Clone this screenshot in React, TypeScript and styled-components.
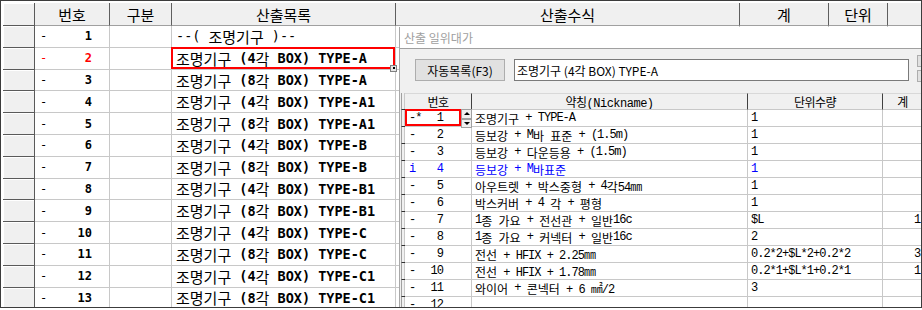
import React from 'react'
import styled, { createGlobalStyle } from 'styled-components'

const KR = `"Noto Sans CJK KR", "Noto Sans", sans-serif`
const MONO = `"DejaVu Sans Mono", "Liberation Mono", "Noto Sans CJK KR", monospace`
const SMALL = `"Liberation Mono", "Noto Sans CJK KR", monospace`

const GlobalStyle = createGlobalStyle`
  html, body {
    margin: 0;
    padding: 0;
    background: #fff;
  }
  body {
    font-family: ${KR};
    color: #000;
  }
`

type Variant = 'list' | 'plain' | 'small'

const HAN = /([\u1100-\u11ff\u3130-\u318f\uac00-\ud7af]+)/

const Han = styled.span<{ $v: Variant }>`
  font-family: ${KR};
  font-size: ${p => (p.$v === 'small' ? '12px' : '15px')};
  font-weight: 400;
`

const Lat = styled.span<{ $v: Variant }>`
  font-family: ${p => (p.$v === 'small' ? SMALL : MONO)};
  font-size: ${p => (p.$v === 'small' ? '12px' : '13.5px')};
  font-weight: ${p => (p.$v === 'list' ? 700 : 400)};
  letter-spacing: ${p => (p.$v === 'small' ? '-1px' : '0')};
  white-space: pre;
`

// hangul in a thin gothic, the rest in a mono face, as the old grid draws it
const Mixed = ({ text, v }: { text: string; v: Variant }) => (
  <>
    {text
      .split(HAN)
      .filter(Boolean)
      .map((part, i) =>
        HAN.test(part) ? (
          <Han key={i} $v={v}>{part}</Han>
        ) : (
          <Lat key={i} $v={v}>{part}</Lat>
        )
      )}
  </>
)

const Frame = styled.div`
  position: relative;
  box-sizing: border-box;
  width: 922px;
  height: 308px;
  border: 1px solid #3c3c3c;
  padding: 2px 0 0 2px;
  overflow: hidden;
  background: #fff;
`

const Sheet = styled.div`
  display: grid;
  grid-template-columns: 32px 75px 62px 224px 344px 89px 59px 60px;
  grid-template-rows: 23px;
  grid-auto-rows: 21.8px;
`

const HeadCell = styled.div`
  box-sizing: border-box;
  display: flex;
  align-items: center;
  justify-content: center;
  background: #f0f0f0;
  border-right: 1px solid #5f5f5f;
  border-bottom: 1px solid #a0a0a0;
  font-family: ${KR};
  font-size: 15px;
  white-space: nowrap;
  overflow: hidden;
`

const Selector = styled.div`
  box-sizing: border-box;
  background: #f0f0f0;
  border-right: 1px solid #5a5a5a;
  border-bottom: 1px solid #5a5a5a;
  box-shadow: inset 1px 1px 0 #fff;
`

const Cell = styled.div`
  box-sizing: border-box;
  display: flex;
  align-items: center;
  border-right: 1px solid #c8c8c8;
  border-bottom: 1px solid #c8c8c8;
  white-space: nowrap;
  overflow: hidden;
`

const NoCell = styled(Cell)<{ $red?: boolean }>`
  justify-content: space-between;
  padding: 0 17px 0 5px;
  color: ${p => (p.$red ? '#f00' : '#000')};
  font-family: ${MONO};
  font-size: 12px;
`

const Num = styled.span`
  font-weight: 700;
`

const ListCell = styled(Cell)<{ $selected?: boolean }>`
  position: relative;
  overflow: visible;
  padding-left: 4px;

  &::after {
    content: '';
    display: ${p => (p.$selected ? 'block' : 'none')};
    position: absolute;
    left: -1px;
    top: -1px;
    right: 0;
    bottom: 0;
    border: 2px solid #f00;
  }
`

const Handle = styled.span`
  position: absolute;
  right: -2px;
  bottom: -3px;
  z-index: 2;
  box-sizing: border-box;
  width: 7px;
  height: 7px;
  background: #e6e6e6;
  border: 1px solid #808080;
  display: flex;
  align-items: center;
  justify-content: center;

  &::before {
    content: '';
    width: 2px;
    height: 2px;
    background: #000;
  }
`

/* ---------- floating panel ---------- */

const Panel = styled.div`
  position: absolute;
  left: 398px;
  top: 26px;
  right: 0;
  bottom: 0;
  display: flex;
  flex-direction: column;
  background: #fff;
  border-left: 1px solid #a8a8a8;
  overflow: hidden;
`

const PanelTitle = styled.div`
  height: 24px;
  padding-left: 4px;
  line-height: 21px;
  font-family: ${KR};
  font-size: 12px;
  color: #a0a0a0;
`

const PanelBody = styled.div`
  flex: 1;
  background: #f0f0f0;
  border-top: 1px solid #a0a0a0;
  padding-left: 1px;
`

const Toolbar = styled.div`
  display: flex;
  align-items: flex-start;
  padding: 10px 0 0 14px;
  height: 22px;

  & > * {
    flex-shrink: 0;
  }
`

const Button = styled.button`
  box-sizing: border-box;
  width: 90px;
  height: 22px;
  padding: 0;
  background: #e1e1e1;
  border: 1px solid #adadad;
  font-family: ${KR};
  font-size: 12px;
  color: #000;
`

const Field = styled.div`
  box-sizing: border-box;
  width: 395px;
  height: 22px;
  margin-left: 9px;
  padding-left: 2px;
  display: flex;
  align-items: center;
  background: #fff;
  border: 1px solid #7a7a7a;
  font-family: ${KR};
  font-size: 12px;
  white-space: pre;
`

const SideButtons = styled.div`
  display: flex;
  flex-direction: column;
  gap: 3px;
  margin: -4px 0 0 8px;
`

const SideButton = styled.span`
  box-sizing: border-box;
  width: 12px;
  height: 12px;
  background: #e1e1e1;
  border: 1px solid #adadad;
`

const Table = styled.div`
  display: grid;
  grid-template-columns: 4px 67px 276px 135px 40px;
  grid-template-rows: 17px;
  grid-auto-rows: 17px;
  margin-top: 12px;
`

const THead = styled.div`
  box-sizing: border-box;
  display: flex;
  align-items: center;
  justify-content: center;
  background: #f0f0f0;
  border-right: 1px solid #404040;
  border-bottom: 1px solid #c8c8c8;
  border-top: 1px solid #d8d8d8;
  font-family: ${SMALL};
  font-size: 12px;
  letter-spacing: -0.5px;
  white-space: nowrap;
  overflow: hidden;
`

const Ind = styled.div`
  box-sizing: border-box;
  background: #f0f0f0;
  border-left: 1px solid #a0a0a0;
  border-bottom: 1px solid #303030;
  box-shadow: inset -1px 0 0 #c8c8c8;
`

const TCell = styled.div<{ $blue?: boolean; $pl?: number }>`
  box-sizing: border-box;
  display: flex;
  align-items: center;
  padding-left: ${p => p.$pl ?? 3}px;
  background: #fff;
  border-right: 1px solid #c8c8c8;
  border-bottom: 1px solid #c8c8c8;
  color: ${p => (p.$blue ? '#0000ff' : '#000')};
  white-space: nowrap;
  overflow: hidden;
`

const TNo = styled(TCell)<{ $selected?: boolean }>`
  position: relative;
  overflow: visible;
  justify-content: space-between;
  padding: 0 28px 0 4px;

  &::after {
    content: '';
    display: ${p => (p.$selected ? 'block' : 'none')};
    position: absolute;
    left: 0;
    top: -1px;
    right: 10px;
    bottom: 0;
    border: 2px solid #f00;
  }
`

const Spinner = styled.span`
  position: absolute;
  right: -1px;
  top: -1px;
  z-index: 2;
  display: flex;
  flex-direction: column;
  width: 11px;
`

const SpinButton = styled.span<{ $down?: boolean }>`
  box-sizing: border-box;
  height: 9.5px;
  display: flex;
  align-items: center;
  justify-content: center;
  background: #f0f0f0;
  border: 1px solid #a0a0a0;

  &::before {
    content: '';
    width: 0;
    height: 0;
    border-left: 3px solid transparent;
    border-right: 3px solid transparent;
    ${p => (p.$down ? 'border-top: 3px solid #000;' : 'border-bottom: 3px solid #000;')}
  }
`

const listRows = [
  { text: '--( 조명기구 )--', plain: true },
  { text: '조명기구 (4각 BOX) TYPE-A' },
  { text: '조명기구 (8각 BOX) TYPE-A' },
  { text: '조명기구 (4각 BOX) TYPE-A1' },
  { text: '조명기구 (8각 BOX) TYPE-A1' },
  { text: '조명기구 (4각 BOX) TYPE-B' },
  { text: '조명기구 (8각 BOX) TYPE-B' },
  { text: '조명기구 (4각 BOX) TYPE-B1' },
  { text: '조명기구 (8각 BOX) TYPE-B1' },
  { text: '조명기구 (4각 BOX) TYPE-C' },
  { text: '조명기구 (8각 BOX) TYPE-C' },
  { text: '조명기구 (4각 BOX) TYPE-C1' },
  { text: '조명기구 (8각 BOX) TYPE-C1' },
]

const items = [
  { mark: '-*', name: '조명기구 + TYPE-A', qty: '1', sum: '' },
  { mark: '-', name: '등보강 + M바 표준 + (1.5m)', qty: '1', sum: '' },
  { mark: '-', name: '등보강 + 다운등용 + (1.5m)', qty: '1', sum: '' },
  { mark: 'i', name: '등보강 + M바표준', qty: '1', sum: '', blue: true },
  { mark: '-', name: '아우트렛 + 박스중형 + 4각54㎜', qty: '1', sum: '' },
  { mark: '-', name: '박스커버 + 4 각 + 평형', qty: '1', sum: '' },
  { mark: '-', name: '1종 가요 + 전선관 + 일반16c', qty: '$L', sum: '1' },
  { mark: '-', name: '1종 가요 + 커넥터 + 일반16c', qty: '2', sum: '' },
  { mark: '-', name: '전선 + HFIX + 2.25㎜', qty: '0.2*2+$L*2+0.2*2', sum: '3' },
  { mark: '-', name: '전선 + HFIX + 1.78㎜', qty: '0.2*1+$L*1+0.2*1', sum: '1' },
  { mark: '-', name: '와이어 + 콘넥터 + 6 ㎟/2', qty: '3', sum: '' },
  { mark: '-', name: '', qty: '', sum: '' },
]

const App = () => {
  return (
    <>
      <GlobalStyle />
      <Frame>
        <Sheet>
          <Selector />
          <HeadCell>번호</HeadCell>
          <HeadCell>구분</HeadCell>
          <HeadCell>산출목록</HeadCell>
          <HeadCell>산출수식</HeadCell>
          <HeadCell>계</HeadCell>
          <HeadCell>단위</HeadCell>
          <HeadCell />
          {listRows.map((row, i) => (
            <React.Fragment key={i}>
              <Selector />
              <NoCell $red={i === 1}>
                <span>-</span>
                <Num>{i + 1}</Num>
              </NoCell>
              <Cell />
              <ListCell $selected={i === 1}>
                <Mixed text={row.text} v={row.plain ? 'plain' : 'list'} />
                {i === 1 && <Handle />}
              </ListCell>
              <Cell />
              <Cell />
              <Cell />
              <Cell />
            </React.Fragment>
          ))}
        </Sheet>

        <Panel>
          <PanelTitle>산출 일위대가</PanelTitle>
          <PanelBody>
            <Toolbar>
              <Button>자동목록(F3)</Button>
              <Field>조명기구 (4각 BOX) TYPE-A</Field>
              <SideButtons>
                <SideButton />
                <SideButton />
              </SideButtons>
            </Toolbar>
            <Table>
              <Ind />
              <THead>번호</THead>
              <THead>약칭(Nickname)</THead>
              <THead>단위수량</THead>
              <THead>계</THead>
              {items.map((it, i) => (
                <React.Fragment key={i}>
                  <Ind />
                  <TNo $blue={it.blue} $selected={i === 0}>
                    <Lat $v="small">{it.mark}</Lat>
                    <Lat $v="small">{i + 1}</Lat>
                    {i === 0 && (
                      <Spinner>
                        <SpinButton />
                        <SpinButton $down />
                      </Spinner>
                    )}
                  </TNo>
                  <TCell $blue={it.blue}>
                    <Mixed text={it.name} v="small" />
                  </TCell>
                  <TCell $blue={it.blue}>
                    <Lat $v="small">{it.qty}</Lat>
                  </TCell>
                  <TCell $pl={31}>
                    <Lat $v="small">{it.sum}</Lat>
                  </TCell>
                </React.Fragment>
              ))}
            </Table>
          </PanelBody>
        </Panel>
      </Frame>
    </>
  )
}

export default App
